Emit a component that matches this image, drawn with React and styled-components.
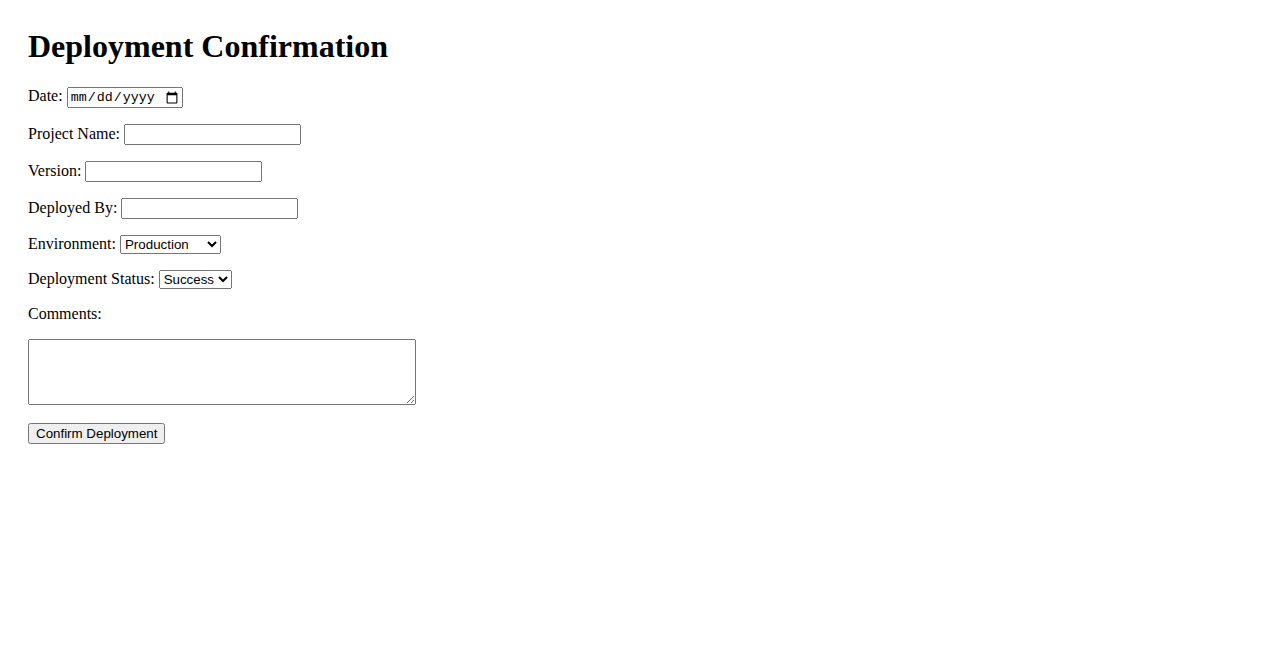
import React, { useState } from 'react';
import styled, { createGlobalStyle } from 'styled-components';

// Estilos globais da página
const GlobalStyle = createGlobalStyle`
  body {
    margin: 8px;
    padding: 20px;
    background: #fff;
    color: #000;
    font-family: "Liberation Serif", "Times New Roman", serif;
    font-size: 16px;
  }
`;

const Title = styled.h1`
  font-size: 32px;
  font-weight: bold;
  margin: 0 0 22px 0;
  line-height: 37px;
`;

const Form = styled.form`
  margin: 0;
`;

const Field = styled.div`
  margin-bottom: 16px;
`;

const Label = styled.label`
  font-family: "Liberation Serif", "Times New Roman", serif;
  font-size: 16px;
  display: ${(p) => (p.$block ? 'block' : 'inline')};
  margin-bottom: ${(p) => (p.$block ? '16px' : '0')};
`;

const TextInput = styled.input`
  box-sizing: border-box;
  width: 177px;
  font-family: "Liberation Sans", Arial, sans-serif;
  font-size: 13.333px;
`;

const DateInput = styled.input`
  box-sizing: border-box;
  width: 116px;
  font-family: "Liberation Mono", "Courier New", monospace;
  font-size: 13.333px;
`;

const Select = styled.select`
  font-family: "Liberation Sans", Arial, sans-serif;
  font-size: 13.333px;
`;

const TextArea = styled.textarea`
  display: block;
  box-sizing: border-box;
  width: 388px;
  height: 66px;
  font-family: "Liberation Mono", "Courier New", monospace;
  font-size: 13.333px;
  margin: 0;
`;

const Button = styled.button`
  font-family: "Liberation Sans", Arial, sans-serif;
  font-size: 13.333px;
  margin-top: 2px;
`;

// Formulário de confirmação de deploy
const App = () => {
  const [formData, setFormData] = useState({
    date: '',
    projectName: '',
    version: '',
    deployedBy: '',
    environment: 'production',
    status: 'success',
    comments: '',
  });

  const handleChange = (e) => {
    const { name, value } = e.target;
    setFormData({ ...formData, [name]: value });
  };

  const handleSubmit = (e) => {
    e.preventDefault();
    console.log('Dados do formulário:', formData);
  };

  return (
    <>
      <GlobalStyle />
      <Title>Deployment Confirmation</Title>
      <Form onSubmit={handleSubmit}>
        <Field>
          <Label htmlFor="date">Date:</Label>{' '}
          <DateInput type="date" id="date" name="date" value={formData.date} onChange={handleChange} />
        </Field>
        <Field>
          <Label htmlFor="projectName">Project Name:</Label>{' '}
          <TextInput type="text" id="projectName" name="projectName" value={formData.projectName} onChange={handleChange} />
        </Field>
        <Field>
          <Label htmlFor="version">Version:</Label>{' '}
          <TextInput type="text" id="version" name="version" value={formData.version} onChange={handleChange} />
        </Field>
        <Field>
          <Label htmlFor="deployedBy">Deployed By:</Label>{' '}
          <TextInput type="text" id="deployedBy" name="deployedBy" value={formData.deployedBy} onChange={handleChange} />
        </Field>
        <Field>
          <Label htmlFor="environment">Environment:</Label>{' '}
          <Select id="environment" name="environment" value={formData.environment} onChange={handleChange}>
            <option value="production">Production</option>
            <option value="staging">Staging</option>
            <option value="development">Development</option>
          </Select>
        </Field>
        <Field>
          <Label htmlFor="status">Deployment Status:</Label>{' '}
          <Select id="status" name="status" value={formData.status} onChange={handleChange}>
            <option value="success">Success</option>
            <option value="failed">Failed</option>
          </Select>
        </Field>
        <Field>
          <Label htmlFor="comments" $block>Comments:</Label>
          <TextArea id="comments" name="comments" value={formData.comments} onChange={handleChange} />
        </Field>
        <Button type="submit">Confirm Deployment</Button>
      </Form>
    </>
  );
};

export default App;
